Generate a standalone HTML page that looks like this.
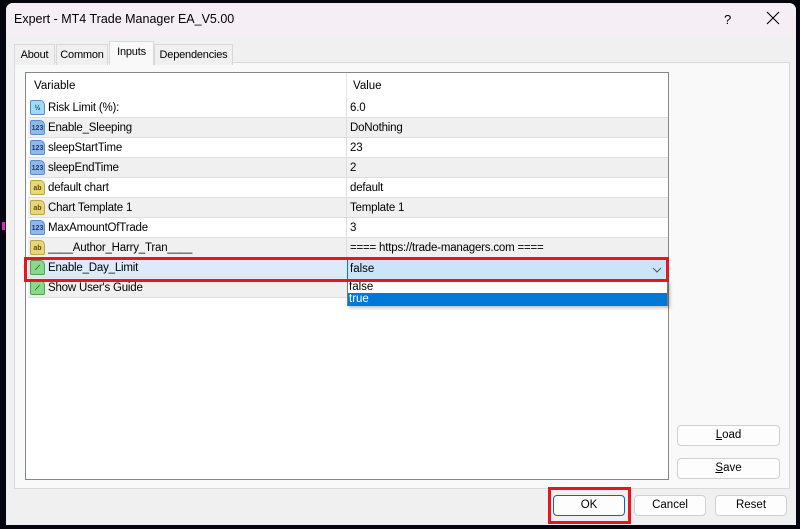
<!DOCTYPE html>
<html><head><meta charset="utf-8"><style>
*{box-sizing:border-box;margin:0;padding:0}
body{width:800px;height:529px;background:#05050f;position:relative;overflow:hidden;font-family:"Liberation Sans",sans-serif;font-size:11.5px;color:#000}
.win{position:absolute;left:6px;top:3px;width:790px;height:522px;background:#f0f0f0;border-radius:7px 7px 0 0;overflow:hidden}
.title{position:absolute;left:0;top:0;width:100%;height:33px;background:#f5eff5;}
.title span{position:absolute;left:8px;top:9px;font-size:12.5px}
.tq{position:absolute;left:718px;top:9px;font-size:13px}
.tx{position:absolute;left:760px;top:8px;width:14px;height:14px}
.tab{position:absolute;top:41px;height:21px;border:1px solid #d9d9d9;border-bottom:none;background:#f0f0f0;padding:4px 0 0;text-align:center;font-size:11px;letter-spacing:-0.2px}
.panel{position:absolute;left:8px;top:59px;width:776px;height:427px;background:#f9f9f9;border:1px solid #d9d9d9}
.list{position:absolute;left:19px;top:69px;width:644px;height:408px;background:#fff;border:1px solid #828790}
.hdr{position:absolute;left:0;top:0;width:100%;height:25px;}
.hdr div{position:absolute;top:7px}
.row{position:absolute;left:2px;width:640px;height:20px;border-bottom:1px solid #dedede;letter-spacing:-0.2px}
.row .n{position:absolute;left:20px;top:4px}
.row .v{position:absolute;left:322px;top:4px}
.row .c{position:absolute;left:318px;top:0;height:20px;border-left:1px solid #dedede}
.ic{position:absolute;left:2px;top:2px;width:15px;height:15px;border-radius:2px 5px 2px 2px;font-size:7px;font-weight:bold;text-align:center;line-height:15px;letter-spacing:0}
.b{background:#8fb9e6;color:#1b3b7a;border:1px solid #5c8cc8}
.y{background:#e8d77a;color:#5a4a00;border:1px solid #b9a544}
.g{background:#8bd88b;color:#1a5a1a;border:1px solid #4aa24a}
.btn{position:absolute;height:21px;background:#fdfdfd;border:1px solid #d0d0d0;border-radius:4px;text-align:center;line-height:19px;font-size:11.5px}
.red{position:absolute;border:3px solid #e8141e}
</style></head><body>
<div class="win">
<div class="title"><span>Expert - MT4 Trade Manager EA_V5.00</span><div class="tq">?</div>
<svg class="tx" viewBox="0 0 14 14"><path d="M1 1L13 13M13 1L1 13" stroke="#000" stroke-width="1.1"/></svg></div>
<div class="panel"></div>
<div class="tab" style="left:8px;width:41px">About</div>
<div class="tab" style="left:50px;width:52px">Common</div>
<div class="tab" style="left:103px;top:38px;height:24px;background:#f9f9f9;width:45px">Inputs</div>
<div class="tab" style="left:148px;width:79px">Dependencies</div>
<div class="list">
<div class="hdr"><div style="left:8px">Variable</div><div style="left:327px">Value</div><div style="position:absolute;left:320px;top:0;height:25px;border-left:1px solid #e5e5e5"></div></div>
<div class="row" style="top:25px"><div class="ic b" style="background:#9fdcf0">½</div><div class="n">Risk Limit (%):</div><div class="c"></div><div class="v">6.0</div></div>
<div class="row" style="top:45px;background:#f0f0f0"><div class="ic b">123</div><div class="n">Enable_Sleeping</div><div class="c"></div><div class="v">DoNothing</div></div>
<div class="row" style="top:65px"><div class="ic b">123</div><div class="n">sleepStartTime</div><div class="c"></div><div class="v">23</div></div>
<div class="row" style="top:85px;background:#f0f0f0"><div class="ic b">123</div><div class="n">sleepEndTime</div><div class="c"></div><div class="v">2</div></div>
<div class="row" style="top:105px"><div class="ic y">ab</div><div class="n">default chart</div><div class="c"></div><div class="v">default</div></div>
<div class="row" style="top:125px;background:#f0f0f0"><div class="ic y">ab</div><div class="n">Chart Template 1</div><div class="c"></div><div class="v">Template 1</div></div>
<div class="row" style="top:145px"><div class="ic b">123</div><div class="n">MaxAmountOfTrade</div><div class="c"></div><div class="v">3</div></div>
<div class="row" style="top:165px;background:#f0f0f0"><div class="ic y">ab</div><div class="n">____Author_Harry_Tran____</div><div class="c"></div><div class="v">==== https://trade-managers.com ====</div></div>
<div class="row" style="top:185px;background:#dcebfa"><div class="ic g">⟋</div><div class="n">Enable_Day_Limit</div></div>
<div class="row" style="top:205px;background:#f0f0f0"><div class="ic g">⟋</div><div class="n">Show User's Guide</div></div>
<div style="position:absolute;left:321px;top:186px;width:321px;height:21px;background:#cce4f7;border:1px solid #0078d7"><span style="position:absolute;left:2px;top:3px">false</span>
<svg style="position:absolute;right:5px;top:7px" width="10" height="6" viewBox="0 0 10 6"><path d="M1 1L5 5L9 1" stroke="#555" fill="none"/></svg></div>
<div style="position:absolute;left:321px;top:207px;width:321px;height:26px;background:#fff;border:1px solid #7a7a7a;box-shadow:2px 2px 3px rgba(0,0,0,.25)"><div style="position:absolute;left:1px;top:0">false</div><div style="position:absolute;left:0;top:12px;width:319px;height:13px;background:#0078d7;color:#fff;padding-left:1px;line-height:13px">true</div></div>
</div>
<div class="red" style="left:18px;top:254px;width:645px;height:25px"></div>
<div class="btn" style="left:671px;top:422px;width:103px"><u>L</u>oad</div>
<div class="btn" style="left:671px;top:455px;width:103px"><u>S</u>ave</div>
<div class="btn" style="left:547px;top:492px;width:72px;border:1px solid #0067c0">OK</div>
<div class="btn" style="left:628px;top:492px;width:72px">Cancel</div>
<div class="btn" style="left:709px;top:492px;width:72px">Reset</div>
<div class="red" style="left:542px;top:484px;width:83px;height:37px"></div>
</div>
<div style="position:absolute;left:2px;top:222px;width:3px;height:8px;background:#e020c0"></div>
</body></html>
